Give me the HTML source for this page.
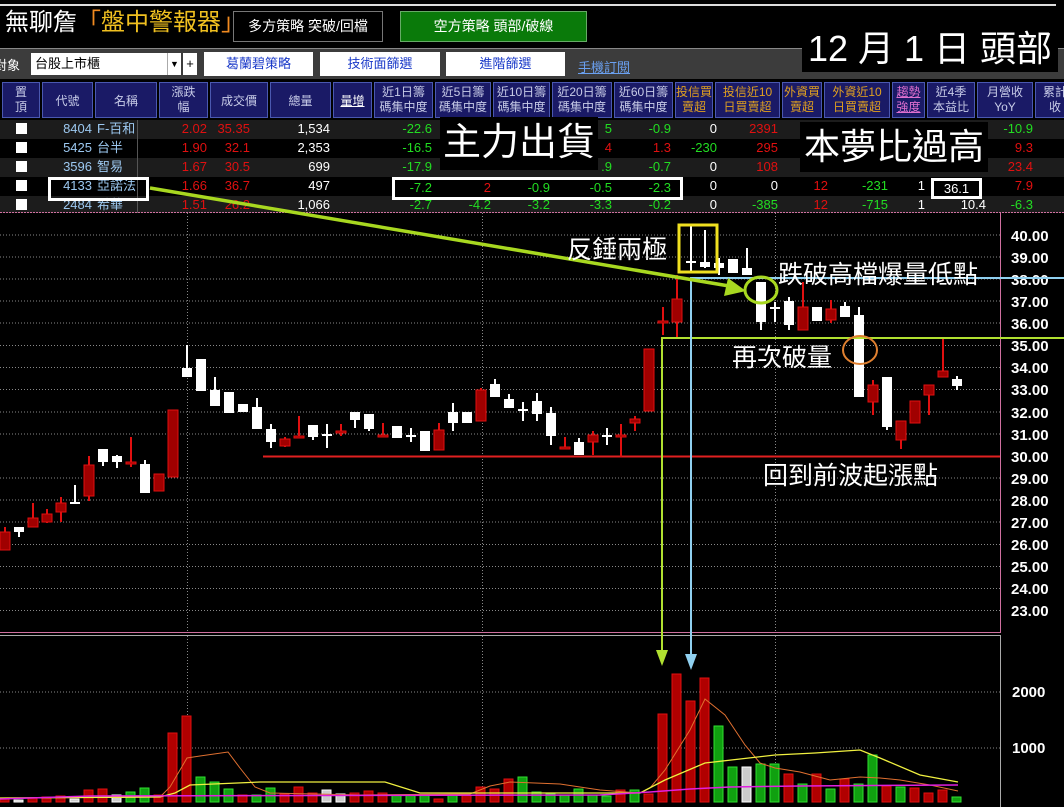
<!DOCTYPE html>
<html><head><meta charset="utf-8"><style>
*{margin:0;padding:0;box-sizing:border-box}
body{width:1064px;height:807px;background:#000;overflow:hidden;position:relative;font-family:"Liberation Sans","Noto Sans CJK TC",sans-serif;color:#fff}
.a{position:absolute;white-space:nowrap}
.h{position:absolute;top:82px;height:36px;background:#1a1a66;border:1px solid #4a58b0;color:#c8cce8;font-size:12px;line-height:15px;text-align:center;padding-top:2px}
.r{position:absolute;font-size:13px;text-align:right;white-space:nowrap;line-height:19px;height:19px}
.n{position:absolute;font-size:13px;white-space:nowrap;line-height:19px;height:19px}
.g{color:#22dd22}.rd{color:#e01010}.w{color:#fff}.b{color:#9cc8f0}
.big{position:absolute;background:#000;color:#fff;white-space:nowrap}
.lab{font-family:"Liberation Sans",sans-serif;font-weight:bold;font-size:15px;fill:#fff}
</style></head><body>
<div class="a" style="left:0;top:4px;width:1056px;height:2px;background:#ddd"></div>
<div class="a" style="left:5px;top:8px;font-size:24px;line-height:30px"><span>無聊詹</span><span style="color:#f08a20">「</span><span style="color:#f0c020">盤中警報器</span><span style="color:#f08a20">」</span></div>
<div class="a" style="left:233px;top:11px;width:150px;height:31px;border:1px solid #777;background:#000;font-size:14px;text-align:center;line-height:29px">多方策略 突破/回檔</div>
<div class="a" style="left:400px;top:11px;width:187px;height:31px;border:1px solid #6a6;background:#0a7a0a;font-size:14px;text-align:center;line-height:29px">空方策略 頭部/破線</div>
<div class="a" style="left:0;top:48px;width:1064px;height:31px;background:#3c3c3c;border-top:1px solid #888"></div>
<div class="a" style="left:0;top:55px;font-size:13px;margin-left:-6px">對象</div>
<div class="a" style="left:31px;top:53px;width:150px;height:22px;background:#fff;color:#000;font-size:13px;line-height:22px;padding-left:4px">台股上市櫃<span style="position:absolute;right:0;top:0;width:14px;height:22px;border-left:1px solid #aaa;font-size:9px;text-align:center">▼</span></div>
<div class="a" style="left:183px;top:53px;width:14px;height:22px;background:#fff;color:#000;font-size:13px;line-height:22px;text-align:center">+</div>
<div class="a" style="left:204px;top:52px;width:109px;height:24px;background:#fff;color:#1838c8;font-size:13px;line-height:24px;text-align:center">葛蘭碧策略</div>
<div class="a" style="left:320px;top:52px;width:120px;height:24px;background:#fff;color:#1838c8;font-size:13px;line-height:24px;text-align:center">技術面篩選</div>
<div class="a" style="left:446px;top:52px;width:119px;height:24px;background:#fff;color:#1838c8;font-size:13px;line-height:24px;text-align:center">進階篩選</div>
<div class="a" style="left:578px;top:57px;color:#6aa0f0;font-size:13px;text-decoration:underline">手機訂閱</div>

<div class="h" style="left:2px;width:38px">置<br>頂</div>
<div class="h" style="left:42px;width:51px;line-height:32px">代號</div>
<div class="h" style="left:95px;width:62px;line-height:32px">名稱</div>
<div class="h" style="left:159px;width:49px">漲跌<br>幅</div>
<div class="h" style="left:210px;width:58px;line-height:32px">成交價</div>
<div class="h" style="left:270px;width:61px;line-height:32px">總量</div>
<div class="h" style="left:333px;width:39px;line-height:32px;color:#fff;text-decoration:underline">量增</div>
<div class="h" style="left:374px;width:59px">近1日籌<br>碼集中度</div>
<div class="h" style="left:435px;width:56px">近5日籌<br>碼集中度</div>
<div class="h" style="left:493px;width:57px">近10日籌<br>碼集中度</div>
<div class="h" style="left:552px;width:60px">近20日籌<br>碼集中度</div>
<div class="h" style="left:614px;width:59px">近60日籌<br>碼集中度</div>
<div class="h" style="left:675px;width:38px;color:#e0a020">投信買<br>賣超</div>
<div class="h" style="left:715px;width:65px;color:#e0a020">投信近10<br>日買賣超</div>
<div class="h" style="left:782px;width:40px;color:#e0a020">外資買<br>賣超</div>
<div class="h" style="left:824px;width:66px;color:#e0a020">外資近10<br>日買賣超</div>
<div class="h" style="left:892px;width:33px;color:#e070d0;text-decoration:underline">趨勢<br>強度</div>
<div class="h" style="left:927px;width:48px">近4季<br>本益比</div>
<div class="h" style="left:977px;width:56px">月營收<br>YoY</div>
<div class="h" style="left:1035px;width:40px">累計<br>收</div>

<div class="a" style="left:0;top:120px;width:1064px;height:19px;background:#1c1c1c"></div>
<div class="a" style="left:0;top:158px;width:1064px;height:19px;background:#1c1c1c"></div>
<div class="a" style="left:0;top:196px;width:1064px;height:17px;background:#1c1c1c"></div>
<div class="a" style="left:137px;top:120px;width:1px;height:93px;background:#555"></div>
<div class="a" style="left:16px;top:123px;width:11px;height:11px;background:#fff"></div>
<div class="a" style="left:16px;top:142px;width:11px;height:11px;background:#fff"></div>
<div class="a" style="left:16px;top:161px;width:11px;height:11px;background:#fff"></div>
<div class="a" style="left:16px;top:180px;width:11px;height:11px;background:#fff"></div>
<div class="a" style="left:16px;top:199px;width:11px;height:11px;background:#fff"></div>

<div class="r b" style="right:972px;top:119px">8404</div><div class="n b" style="left:97px;top:119px">F-百和</div>
<div class="r b" style="right:972px;top:138px">5425</div><div class="n b" style="left:97px;top:138px">台半</div>
<div class="r b" style="right:972px;top:157px">3596</div><div class="n b" style="left:97px;top:157px">智易</div>
<div class="r b" style="right:972px;top:176px">4133</div><div class="n b" style="left:97px;top:176px">亞諾法</div>
<div class="r b" style="right:972px;top:195px">2484</div><div class="n b" style="left:97px;top:195px">希華</div>

<div class="r rd" style="right:857px;top:119px">2.02</div><div class="r rd" style="right:814px;top:119px">35.35</div><div class="r w" style="right:734px;top:119px">1,534</div><div class="r g" style="right:632px;top:119px">-22.6</div>
<div class="r rd" style="right:857px;top:138px">1.90</div><div class="r rd" style="right:814px;top:138px">32.1</div><div class="r w" style="right:734px;top:138px">2,353</div><div class="r g" style="right:632px;top:138px">-16.5</div>
<div class="r rd" style="right:857px;top:157px">1.67</div><div class="r rd" style="right:814px;top:157px">30.5</div><div class="r w" style="right:734px;top:157px">699</div><div class="r g" style="right:632px;top:157px">-17.9</div>
<div class="r rd" style="right:857px;top:176px">1.66</div><div class="r rd" style="right:814px;top:176px">36.7</div><div class="r w" style="right:734px;top:176px">497</div>
<div class="r rd" style="right:857px;top:195px">1.51</div><div class="r rd" style="right:814px;top:195px">26.2</div><div class="r w" style="right:734px;top:195px">1,066</div><div class="r g" style="right:632px;top:195px">-2.7</div>

<div class="r g" style="right:452px;top:119px">5</div><div class="r g" style="right:393px;top:119px">-0.9</div><div class="r w" style="right:347px;top:119px">0</div><div class="r rd" style="right:286px;top:119px">2391</div><div class="r g" style="right:31px;top:119px">-10.9</div>
<div class="r rd" style="right:452px;top:138px">4</div><div class="r rd" style="right:393px;top:138px">1.3</div><div class="r g" style="right:347px;top:138px">-230</div><div class="r rd" style="right:286px;top:138px">295</div><div class="r rd" style="right:31px;top:138px">9.3</div>
<div class="r g" style="right:452px;top:157px">.9</div><div class="r g" style="right:393px;top:157px">-0.7</div><div class="r w" style="right:347px;top:157px">0</div><div class="r rd" style="right:286px;top:157px">108</div><div class="r rd" style="right:31px;top:157px">23.4</div>
<div class="r w" style="right:347px;top:176px">0</div><div class="r w" style="right:286px;top:176px">0</div><div class="r rd" style="right:236px;top:176px">12</div><div class="r g" style="right:176px;top:176px">-231</div><div class="r w" style="right:139px;top:176px">1</div><div class="r rd" style="right:31px;top:176px">7.9</div>
<div class="r g" style="right:573px;top:195px">-4.2</div><div class="r g" style="right:514px;top:195px">-3.2</div><div class="r g" style="right:452px;top:195px">-3.3</div><div class="r g" style="right:393px;top:195px">-0.2</div><div class="r w" style="right:347px;top:195px">0</div><div class="r g" style="right:286px;top:195px">-385</div><div class="r rd" style="right:236px;top:195px">12</div><div class="r g" style="right:176px;top:195px">-715</div><div class="r w" style="right:139px;top:195px">1</div><div class="r w" style="right:78px;top:195px">10.4</div><div class="r g" style="right:31px;top:195px">-6.3</div>

<div class="a" style="left:48px;top:177px;width:101px;height:24px;border:3px solid #fff"></div>
<div class="a" style="left:392px;top:177px;width:291px;height:23px;border:3px solid #fff;background:#000"></div>
<div class="r g" style="right:632px;top:178px">-7.2</div><div class="r rd" style="right:573px;top:178px">2</div><div class="r g" style="right:514px;top:178px">-0.9</div><div class="r g" style="right:452px;top:178px">-0.5</div><div class="r g" style="right:393px;top:178px">-2.3</div>
<div class="a" style="left:931px;top:178px;width:51px;height:21px;border:3px solid #fff;background:#000;font-size:13px;text-align:center;line-height:15px">36.1</div>

<div class="big" style="left:440px;top:117px;width:158px;height:53px;font-size:38px;line-height:53px;text-align:center">主力出貨</div>
<div class="big" style="left:800px;top:122px;width:188px;height:50px;font-size:36px;line-height:50px;text-align:center">本夢比過高</div>
<div class="big" style="left:802px;top:26px;width:256px;height:46px;font-size:36px;line-height:46px;text-align:center">12 月 1 日 頭部</div>

<svg class="a" style="left:0;top:0" width="1064" height="807" viewBox="0 0 1064 807">
<line x1="0" y1="212.5" x2="1064" y2="212.5" stroke="#d070a0" stroke-dasharray="2,1"/>
<line x1="1000.5" y1="212" x2="1000.5" y2="633" stroke="#d070a0"/>
<line x1="0" y1="632.5" x2="1000" y2="632.5" stroke="#d070a0"/>
<line x1="0" y1="635.5" x2="1000" y2="635.5" stroke="#aaa"/>
<line x1="1000.5" y1="635" x2="1000.5" y2="807" stroke="#aaa"/>
<g stroke="#888" stroke-dasharray="1,2">
<line x1="0" y1="235" x2="1000" y2="235"/><line x1="0" y1="257" x2="1000" y2="257"/><line x1="0" y1="279" x2="1000" y2="279"/><line x1="0" y1="301" x2="1000" y2="301"/><line x1="0" y1="323" x2="1000" y2="323"/><line x1="0" y1="345.5" x2="1000" y2="345.5"/><line x1="0" y1="367.5" x2="1000" y2="367.5"/><line x1="0" y1="389.5" x2="1000" y2="389.5"/><line x1="0" y1="412" x2="1000" y2="412"/><line x1="0" y1="434" x2="1000" y2="434"/><line x1="0" y1="478" x2="1000" y2="478"/><line x1="0" y1="500" x2="1000" y2="500"/><line x1="0" y1="522" x2="1000" y2="522"/><line x1="0" y1="544.5" x2="1000" y2="544.5"/><line x1="0" y1="566.5" x2="1000" y2="566.5"/><line x1="0" y1="588.5" x2="1000" y2="588.5"/><line x1="0" y1="610.5" x2="1000" y2="610.5"/>
<line x1="187.5" y1="213" x2="187.5" y2="632"/><line x1="482.5" y1="213" x2="482.5" y2="632"/><line x1="775.5" y1="213" x2="775.5" y2="632"/>
<line x1="187.5" y1="636" x2="187.5" y2="802"/><line x1="482.5" y1="636" x2="482.5" y2="802"/><line x1="775.5" y1="636" x2="775.5" y2="802"/>
<line x1="0" y1="692" x2="1000" y2="692"/><line x1="0" y1="748" x2="1000" y2="748"/>
</g>
<g class="lab">
<text x="1011" y="241">40.00</text><text x="1011" y="263">39.00</text><text x="1011" y="285">38.00</text><text x="1011" y="307">37.00</text><text x="1011" y="329">36.00</text><text x="1011" y="351">35.00</text><text x="1011" y="373">34.00</text><text x="1011" y="395">33.00</text><text x="1011" y="418">32.00</text><text x="1011" y="440">31.00</text><text x="1011" y="462">30.00</text><text x="1011" y="484">29.00</text><text x="1011" y="506">28.00</text><text x="1011" y="528">27.00</text><text x="1011" y="550">26.00</text><text x="1011" y="572">25.00</text><text x="1011" y="594">24.00</text><text x="1011" y="616">23.00</text>
<text x="1012" y="697">2000</text><text x="1012" y="753">1000</text>
</g>
<line x1="263" y1="456.5" x2="1000" y2="456.5" stroke="#e02020" stroke-width="2"/>

<g stroke="#e01010" stroke-width="2">
<line x1="5" y1="527" x2="5" y2="550"/><line x1="33" y1="503" x2="33" y2="527"/><line x1="47" y1="509" x2="47" y2="523"/><line x1="61" y1="497" x2="61" y2="522"/><line x1="89" y1="456" x2="89" y2="501"/><line x1="131" y1="437" x2="131" y2="467"/><line x1="159" y1="474" x2="159" y2="491"/><line x1="173" y1="410" x2="173" y2="477"/><line x1="285" y1="437" x2="285" y2="447"/><line x1="299" y1="416" x2="299" y2="437"/><line x1="341" y1="424" x2="341" y2="436"/><line x1="383" y1="423" x2="383" y2="436"/><line x1="439" y1="423" x2="439" y2="450"/><line x1="481" y1="388" x2="481" y2="421"/><line x1="565" y1="437" x2="565" y2="448"/><line x1="593" y1="431" x2="593" y2="455"/><line x1="621" y1="424" x2="621" y2="457"/><line x1="635" y1="416" x2="635" y2="431"/><line x1="649" y1="349" x2="649" y2="411"/><line x1="663" y1="307" x2="663" y2="335"/><line x1="677" y1="275" x2="677" y2="339"/><line x1="803" y1="282" x2="803" y2="330"/><line x1="831" y1="300" x2="831" y2="323"/><line x1="873" y1="380" x2="873" y2="415"/><line x1="901" y1="421" x2="901" y2="449"/><line x1="915" y1="401" x2="915" y2="423"/><line x1="929" y1="385" x2="929" y2="415"/><line x1="943" y1="337" x2="943" y2="377"/>
</g>
<g fill="#a00000" stroke="#e01010" stroke-width="1">
<rect x="0" y="532" width="10" height="18"/><rect x="28" y="518" width="10" height="9"/><rect x="42" y="514" width="10" height="8"/><rect x="56" y="503" width="10" height="9"/><rect x="84" y="465" width="10" height="31"/><rect x="126" y="462" width="10" height="2"/><rect x="154" y="474" width="10" height="17"/><rect x="168" y="410" width="10" height="67"/><rect x="280" y="439" width="10" height="7"/><rect x="294" y="436" width="10" height="2"/><rect x="336" y="431" width="10" height="2"/><rect x="378" y="435" width="10" height="2"/><rect x="434" y="430" width="10" height="20"/><rect x="476" y="390" width="10" height="31"/><rect x="560" y="447" width="10" height="2"/><rect x="588" y="435" width="10" height="7"/><rect x="616" y="435" width="10" height="2"/><rect x="630" y="419" width="10" height="4"/><rect x="644" y="349" width="10" height="62"/><rect x="658" y="321" width="10" height="2"/><rect x="672" y="299" width="10" height="23"/><rect x="798" y="307" width="10" height="23"/><rect x="826" y="309" width="10" height="11"/><rect x="868" y="385" width="10" height="17"/><rect x="896" y="421" width="10" height="19"/><rect x="910" y="401" width="10" height="22"/><rect x="924" y="385" width="10" height="10"/><rect x="938" y="371" width="10" height="6"/>
</g>
<g stroke="#fff" stroke-width="2">
<line x1="19" y1="527" x2="19" y2="537"/><line x1="75" y1="485" x2="75" y2="503"/><line x1="103" y1="449" x2="103" y2="466"/><line x1="117" y1="455" x2="117" y2="468"/><line x1="145" y1="460" x2="145" y2="493"/><line x1="187" y1="345" x2="187" y2="377"/><line x1="215" y1="377" x2="215" y2="406"/><line x1="257" y1="398" x2="257" y2="429"/><line x1="271" y1="424" x2="271" y2="448"/><line x1="313" y1="425" x2="313" y2="440"/><line x1="327" y1="424" x2="327" y2="448"/><line x1="355" y1="412" x2="355" y2="428"/><line x1="369" y1="414" x2="369" y2="431"/><line x1="411" y1="428" x2="411" y2="442"/><line x1="453" y1="403" x2="453" y2="431"/><line x1="495" y1="379" x2="495" y2="397"/><line x1="509" y1="394" x2="509" y2="408"/><line x1="523" y1="402" x2="523" y2="421"/><line x1="537" y1="393" x2="537" y2="421"/><line x1="551" y1="407" x2="551" y2="445"/><line x1="579" y1="438" x2="579" y2="455"/><line x1="607" y1="428" x2="607" y2="445"/><line x1="691" y1="225" x2="691" y2="272"/><line x1="705" y1="230" x2="705" y2="268"/><line x1="719" y1="258" x2="719" y2="275"/><line x1="747" y1="248" x2="747" y2="275"/><line x1="761" y1="282" x2="761" y2="330"/><line x1="775" y1="302" x2="775" y2="322"/><line x1="789" y1="297" x2="789" y2="330"/><line x1="845" y1="302" x2="845" y2="317"/><line x1="859" y1="307" x2="859" y2="397"/><line x1="887" y1="377" x2="887" y2="430"/><line x1="957" y1="376" x2="957" y2="390"/>
</g>
<g fill="#fff">
<rect x="14" y="527" width="10" height="5"/><rect x="70" y="502" width="10" height="2"/><rect x="98" y="449" width="10" height="13"/><rect x="112" y="456" width="10" height="6"/><rect x="140" y="464" width="10" height="29"/><rect x="182" y="368" width="10" height="9"/><rect x="196" y="359" width="10" height="32"/><rect x="210" y="390" width="10" height="16"/><rect x="224" y="392" width="10" height="21"/><rect x="238" y="404" width="10" height="8"/><rect x="252" y="407" width="10" height="22"/><rect x="266" y="429" width="10" height="13"/><rect x="308" y="425" width="10" height="12"/><rect x="322" y="434" width="10" height="2"/><rect x="350" y="412" width="10" height="8"/><rect x="364" y="414" width="10" height="15"/><rect x="392" y="426" width="10" height="12"/><rect x="406" y="435" width="10" height="2"/><rect x="420" y="431" width="10" height="20"/><rect x="448" y="412" width="10" height="11"/><rect x="462" y="412" width="10" height="11"/><rect x="490" y="384" width="10" height="13"/><rect x="504" y="399" width="10" height="9"/><rect x="518" y="409" width="10" height="2"/><rect x="532" y="401" width="10" height="13"/><rect x="546" y="413" width="10" height="23"/><rect x="574" y="442" width="10" height="13"/><rect x="602" y="435" width="10" height="2"/><rect x="686" y="261" width="10" height="2"/><rect x="700" y="262" width="10" height="5"/><rect x="714" y="263" width="10" height="5"/><rect x="728" y="259" width="10" height="14"/><rect x="742" y="268" width="10" height="7"/><rect x="756" y="282" width="10" height="40"/><rect x="770" y="307" width="10" height="2"/><rect x="784" y="301" width="10" height="24"/><rect x="812" y="307" width="10" height="14"/><rect x="840" y="306" width="10" height="11"/><rect x="854" y="315" width="10" height="82"/><rect x="882" y="377" width="10" height="50"/><rect x="952" y="379" width="10" height="7"/>
</g>

<g fill="#b00000" stroke="#e01010">
<rect x="0" y="798" width="9" height="4"/><rect x="28" y="798" width="9" height="4"/><rect x="42" y="797" width="9" height="5"/><rect x="56" y="796" width="9" height="6"/><rect x="84" y="790" width="9" height="12"/><rect x="98" y="789" width="9" height="13"/><rect x="154" y="795" width="9" height="7"/><rect x="168" y="733" width="9" height="69"/><rect x="182" y="716" width="9" height="86"/><rect x="238" y="795" width="9" height="7"/><rect x="280" y="794" width="9" height="8"/><rect x="294" y="787" width="9" height="15"/><rect x="308" y="793" width="9" height="9"/><rect x="350" y="793" width="9" height="9"/><rect x="364" y="791" width="9" height="11"/><rect x="378" y="793" width="9" height="9"/><rect x="434" y="799" width="9" height="3"/><rect x="462" y="795" width="9" height="7"/><rect x="476" y="787" width="9" height="15"/><rect x="490" y="789" width="9" height="13"/><rect x="504" y="779" width="9" height="23"/><rect x="616" y="790" width="9" height="12"/><rect x="644" y="794" width="9" height="8"/><rect x="658" y="714" width="9" height="88"/><rect x="672" y="674" width="9" height="128"/><rect x="686" y="701" width="9" height="101"/><rect x="700" y="678" width="9" height="124"/><rect x="784" y="774" width="9" height="28"/><rect x="812" y="774" width="9" height="28"/><rect x="840" y="779" width="9" height="23"/><rect x="882" y="786" width="9" height="16"/><rect x="910" y="788" width="9" height="14"/><rect x="924" y="793" width="9" height="9"/><rect x="938" y="790" width="9" height="12"/>
</g>
<g fill="#10a010" stroke="#30e030">
<rect x="126" y="792" width="9" height="10"/><rect x="140" y="788" width="9" height="14"/><rect x="196" y="777" width="9" height="25"/><rect x="210" y="782" width="9" height="20"/><rect x="224" y="789" width="9" height="13"/><rect x="252" y="795" width="9" height="7"/><rect x="266" y="788" width="9" height="14"/><rect x="392" y="795" width="9" height="7"/><rect x="406" y="795" width="9" height="7"/><rect x="420" y="795" width="9" height="7"/><rect x="448" y="795" width="9" height="7"/><rect x="518" y="777" width="9" height="25"/><rect x="532" y="792" width="9" height="10"/><rect x="546" y="794" width="9" height="8"/><rect x="560" y="795" width="9" height="7"/><rect x="574" y="789" width="9" height="13"/><rect x="588" y="795" width="9" height="7"/><rect x="602" y="796" width="9" height="6"/><rect x="630" y="790" width="9" height="12"/><rect x="714" y="726" width="9" height="76"/><rect x="728" y="767" width="9" height="35"/><rect x="756" y="764" width="9" height="38"/><rect x="770" y="764" width="9" height="38"/><rect x="798" y="784" width="9" height="18"/><rect x="826" y="789" width="9" height="13"/><rect x="854" y="784" width="9" height="18"/><rect x="868" y="755" width="9" height="47"/><rect x="896" y="787" width="9" height="15"/><rect x="952" y="797" width="9" height="5"/>
</g>
<g fill="#ccc" stroke="#fff">
<rect x="14" y="800" width="9" height="2"/><rect x="70" y="799" width="9" height="3"/><rect x="112" y="795" width="9" height="7"/><rect x="322" y="790" width="9" height="12"/><rect x="336" y="794" width="9" height="8"/><rect x="742" y="767" width="9" height="35"/>
</g>
<polyline fill="none" stroke="#e07030" stroke-width="1" points="0,798 160,797 170,787 180,770 187,758 200,756 228,752 240,768 255,787 270,793 360,795 470,794 490,786 510,782 560,784 600,790 640,793 650,788 665,770 690,730 705,699 725,715 745,745 760,763 775,768 800,772 830,780 860,777 880,778 900,780 930,785 958,791"/>
<polyline fill="none" stroke="#f0f040" stroke-width="1.3" points="0,798 160,797 175,793 190,785 260,782 385,782 420,793 640,793 665,780 705,763 775,755 815,753 860,750 880,758 920,775 958,782"/>
<polyline fill="none" stroke="#e020e0" stroke-width="1.5" points="0,799 90,796 600,795 650,792 690,789 730,787 800,786 958,785"/>

<polyline fill="none" stroke="#b0e030" stroke-width="2" points="1064,338 662,338 662,655"/>
<polygon fill="#b0e030" points="656,650 668,650 662,666"/>
<polyline fill="none" stroke="#90d0f0" stroke-width="2" points="1064,278 691,278 691,658"/>
<polygon fill="#90d0f0" points="685,654 697,654 691,670"/>
<rect x="679" y="225" width="38" height="47" fill="none" stroke="#f0e020" stroke-width="3"/>
<line x1="150" y1="188" x2="735" y2="287" stroke="#a8d820" stroke-width="3.5"/>
<polygon fill="#a8d820" points="746,291 728,278 724,296"/>
<ellipse cx="761" cy="290" rx="16" ry="13" fill="none" stroke="#a8d820" stroke-width="3"/>
<ellipse cx="860" cy="350" rx="17" ry="14" fill="none" stroke="#e08030" stroke-width="2"/>
<g fill="#fff" font-family="Liberation Sans,Noto Sans CJK TC,sans-serif" font-size="25">
<text x="567" y="258">反錘兩極</text>
<text x="778" y="283">跌破高檔爆量低點</text>
<text x="732" y="366">再次破量</text>
<text x="763" y="484">回到前波起漲點</text>
</g>
</svg>
</body></html>
